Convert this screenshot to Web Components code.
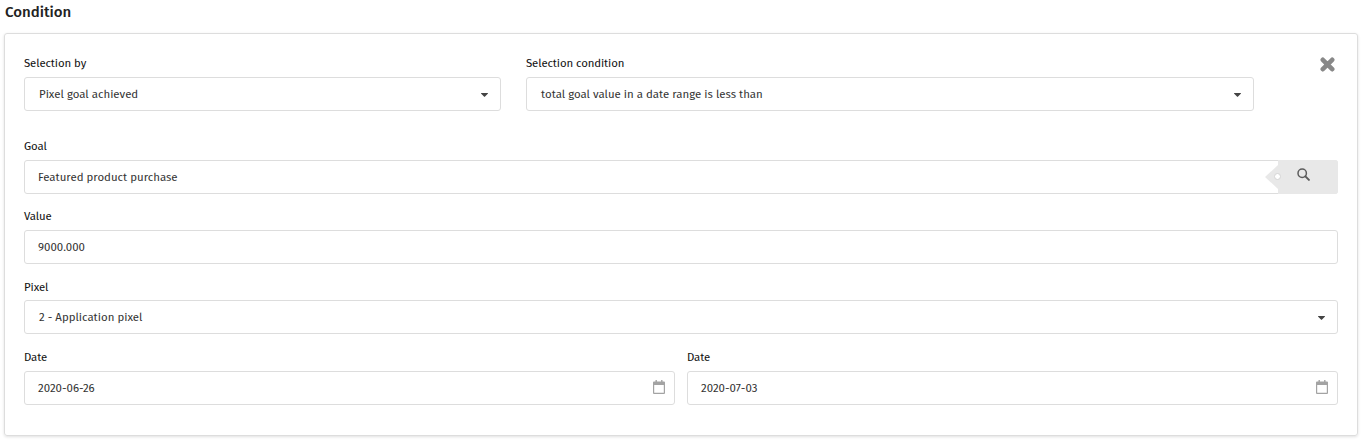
<!DOCTYPE html>
<html>
<head>
<meta charset="utf-8">
<style>
    html, body { margin: 0; padding: 0; background: #fff; }
    body { font-family: "Fira Sans", "Open Sans", "Noto Sans", sans-serif; color: #333; }
</style>
</head>
<body>
<condition-panel></condition-panel>
<script>
const ICONS = {
    calendar: '<svg width="12" height="14" viewBox="0 0 12 14"><path fill="#a3a3a3" d="M0 2.5a1 1 0 0 1 1-1h1.5V0h1.4v1.5h4.2V0h1.4v1.5H11a1 1 0 0 1 1 1V13a1 1 0 0 1-1 1H1a1 1 0 0 1-1-1zM1.2 5v7.8h9.6V5z"/></svg>',
    search: '<svg width="13" height="13" viewBox="0 0 13 13"><circle cx="5.2" cy="5.2" r="4.2" fill="none" stroke="#5c5c5c" stroke-width="1.5"/><path d="M8.4 8.4l3.5 3.5" stroke="#5c5c5c" stroke-width="2" stroke-linecap="round"/></svg>',
    times: '<svg width="15" height="15" viewBox="0 0 15 15"><path d="M2.8 2.8l9.4 9.4M12.2 2.8l-9.4 9.4" stroke="#888" stroke-width="4.6" stroke-linecap="round"/></svg>',
    caret: '<svg width="7" height="4" viewBox="0 0 7 4"><path fill="#444" d="M.4 0h6.2c.4 0 .5.4.2.7L3.8 3.8c-.2.2-.4.2-.6 0L.2.7C-.1.4 0 0 .4 0z"/></svg>'
};

class FieldLabel extends HTMLElement {
    constructor() {
        super();
        this.attachShadow({mode: 'open'}).innerHTML = `
            <style>
                :host { display: block; font-size: 11.4px; font-weight: 400; letter-spacing: -.1px; line-height: 16px; color: #111; padding-top: 1px; margin-bottom: 6px; }
            </style>
            <slot></slot>`;
    }
}

class InputBox extends HTMLElement {
    constructor() {
        super();
        this.attachShadow({mode: 'open'}).innerHTML = `
            <style>
                :host { display: flex; align-items: center; height: 34px; box-sizing: border-box; border: 1px solid #ddd; border-radius: 3px; background: #fff; font-size: 11.45px; color: #333; padding-left: 13px; position: relative; }
                :host([select]) { padding-left: 14px; }
                .text { flex: 1; white-space: nowrap; }
                #end { display: flex; }
                :host([select]) #end { margin-right: 12px; margin-top: 1px; }
                :host([date]) #end { margin-right: 9px; margin-top: -2px; }
            </style>
            <span class="text"><slot></slot></span>
            <span id="end"></span>`;
    }
    connectedCallback() {
        const end = this.shadowRoot.querySelector('#end');
        if (this.hasAttribute('select')) end.innerHTML = ICONS.caret;
        if (this.hasAttribute('date')) end.innerHTML = ICONS.calendar;
    }
}

class SearchAddon extends HTMLElement {
    constructor() {
        super();
        this.attachShadow({mode: 'open'}).innerHTML = `
            <style>
                :host { position: absolute; right: -1px; top: -1px; height: 34px; width: 60px; background: #e8e8e8; border-radius: 0 3px 3px 0; display: block; }
                .notch { position: absolute; left: -13px; top: 5px; width: 0; height: 0; border: 12px solid transparent; border-right: 13px solid #e8e8e8; border-left: 0; }
                .dot { position: absolute; left: -4px; top: 13px; width: 5px; height: 5px; border: 1px solid #d4d4d4; border-radius: 50%; background: #fff; }
                .ico { position: absolute; left: 19px; top: 8px; display: flex; }
            </style>
            <span class="notch"></span><span class="dot"></span>
            <span class="ico">${ICONS.search}</span>`;
    }
}

class ConditionPanel extends HTMLElement {
    constructor() {
        super();
        this.attachShadow({mode: 'open'}).innerHTML = `
            <style>
                :host { display: block; padding: 4px 7px 7px 4px; }
                h2 { margin: 0 0 13px; font-size: 15px; line-height: 16px; font-weight: 500; color: #222; padding-left: 1px; }
                .card { border: 1px solid #ddd; border-radius: 3px; box-shadow: 0 1px 3px rgba(0,0,0,.12); padding: 20px 19px 30px 19px; height: 403px; box-sizing: border-box; display: flex; flex-direction: column; }
                .top { display: grid; grid-template-columns: 477px 728px 1fr; column-gap: 25px; margin-bottom: 26px; }
                .close { justify-self: end; margin-top: 3px; margin-right: 3px; }
                .row { margin-bottom: 13px; }
                .row.pixel { margin-bottom: 14px; }
                .row.pixel field-label { padding-top: 2px; margin-bottom: 5px; }
                .dates { display: grid; grid-template-columns: 1fr 1fr; column-gap: 12px; }
            </style>
            <h2>Condition</h2>
            <div class="card">
                <div class="top">
                    <div><field-label>Selection by</field-label><input-box select>Pixel goal achieved</input-box></div>
                    <div><field-label>Selection condition</field-label><input-box select>total goal value in a date range is less than</input-box></div>
                    <div class="close">${ICONS.times}</div>
                </div>
                <div class="row"><field-label>Goal</field-label><input-box>Featured product purchase<search-addon></search-addon></input-box></div>
                <div class="row"><field-label>Value</field-label><input-box>9000.000</input-box></div>
                <div class="row pixel"><field-label>Pixel</field-label><input-box select>2 - Application pixel</input-box></div>
                <div class="dates">
                    <div><field-label>Date</field-label><input-box date>2020-06-26</input-box></div>
                    <div><field-label>Date</field-label><input-box date>2020-07-03</input-box></div>
                </div>
            </div>`;
    }
}

customElements.define('field-label', FieldLabel);
customElements.define('input-box', InputBox);
customElements.define('search-addon', SearchAddon);
customElements.define('condition-panel', ConditionPanel);
</script>
</body>
</html>
